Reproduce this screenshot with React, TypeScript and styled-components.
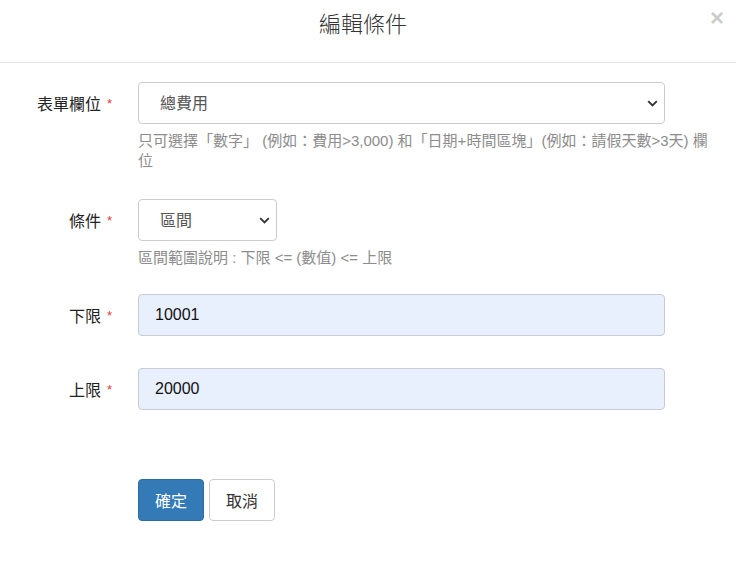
import styled, { createGlobalStyle } from 'styled-components';

const GlobalStyle = createGlobalStyle`
  html, body {
    margin: 0;
    padding: 0;
    background: #fff;
  }
  body {
    font-family: "Liberation Sans", "Noto Sans CJK TC", sans-serif;
    color: #333;
  }
  * {
    box-sizing: border-box;
  }
`;

const Modal = styled.div`
  width: 736px;
  height: 565px;
  background: #fff;
`;

const Header = styled.div`
  position: relative;
  height: 63px;
  border-bottom: 1px solid #e5e5e5;
  display: flex;
  align-items: center;
  justify-content: center;
  padding: 0 10px 12px 0;
`;

const Title = styled.h4`
  margin: 0;
  font-size: 22px;
  font-weight: 300;
  color: #333;
  line-height: 1.2;
`;

const Close = styled.button`
  position: absolute;
  top: 6px;
  right: 12px;
  border: 0;
  background: none;
  padding: 0;
  font-family: "Liberation Sans", sans-serif;
  font-size: 24px;
  font-weight: 700;
  line-height: 1;
  color: #000;
  opacity: 0.2;
  cursor: pointer;
`;

const Body = styled.form`
  padding: 19px 15px 0 0;
`;

const Group = styled.div<{ $gap: number }>`
  display: grid;
  grid-template-columns: 112px 1fr;
  column-gap: 26px;
  margin-bottom: ${p => p.$gap}px;
`;

const Label = styled.label`
  grid-column: 1;
  grid-row: 1;
  align-self: center;
  text-align: right;
  font-size: 16px;
  font-weight: 400;
  color: #222;
  white-space: nowrap;
`;

const Required = styled.span`
  color: #e53935;
  font-size: 13px;
  margin-left: 6px;
  vertical-align: 2px;
`;

const Control = styled.div<{ $width: number }>`
  grid-column: 2;
  grid-row: 1;
  position: relative;
  width: ${p => p.$width}px;
`;

const Select = styled.select`
  appearance: none;
  width: 100%;
  height: 42px;
  padding: 0 30px 0 21px;
  font-family: inherit;
  font-size: 16px;
  color: #555;
  background: #fff;
  border: 1px solid #ccc;
  border-radius: 4px;
  outline: none;
`;

const Arrow = styled.svg`
  position: absolute;
  right: 7px;
  top: 18px;
  pointer-events: none;
`;

const Input = styled.input`
  width: 100%;
  height: 42px;
  padding: 0 16px;
  font-family: inherit;
  font-size: 16px;
  color: #111;
  background: #e8f0fe;
  border: 1px solid #c8ccd1;
  border-radius: 4px;
  outline: none;
`;

const Help = styled.p`
  grid-column: 2;
  grid-row: 2;
  margin: 7px 0 0;
  font-size: 15px;
  line-height: 20px;
  color: #8c8c8c;
`;

const Actions = styled.div`
  display: flex;
  gap: 5px;
  margin-left: 138px;
  margin-top: 69px;
`;

const Button = styled.button<{ $primary?: boolean }>`
  height: 42px;
  padding: 0 16px;
  font-family: inherit;
  font-size: 16px;
  border-radius: 4px;
  cursor: pointer;
  color: ${p => (p.$primary ? '#fff' : '#333')};
  background: ${p => (p.$primary ? '#337ab7' : '#fff')};
  border: 1px solid ${p => (p.$primary ? '#2e6da4' : '#ccc')};
`;

const Chevron = () => (
  <Arrow width="11" height="7" viewBox="0 0 11 7">
    <path d="M1.2 1.2 5.5 5.5 9.8 1.2" fill="none" stroke="#333" strokeWidth="1.9" />
  </Arrow>
);

const App = () => (
  <>
    <GlobalStyle />
    <Modal>
      <Header>
        <Title>編輯條件</Title>
        <Close type="button">×</Close>
      </Header>
      <Body>
        <Group $gap={28}>
          <Label>
            表單欄位<Required>*</Required>
          </Label>
          <Control $width={527}>
            <Select defaultValue="total">
              <option value="total">總費用</option>
            </Select>
            <Chevron />
          </Control>
          <Help>
            只可選擇「數字」 (例如：費用&gt;3,000) 和「日期+時間區塊」(例如：請假天數&gt;3天) 欄位
          </Help>
        </Group>
        <Group $gap={26}>
          <Label>
            條件<Required>*</Required>
          </Label>
          <Control $width={139}>
            <Select defaultValue="range">
              <option value="range">區間</option>
            </Select>
            <Chevron />
          </Control>
          <Help>區間範圍說明 : 下限 &lt;= (數值) &lt;= 上限</Help>
        </Group>
        <Group $gap={32}>
          <Label>
            下限<Required>*</Required>
          </Label>
          <Control $width={527}>
            <Input defaultValue="10001" />
          </Control>
        </Group>
        <Group $gap={0}>
          <Label>
            上限<Required>*</Required>
          </Label>
          <Control $width={527}>
            <Input defaultValue="20000" />
          </Control>
        </Group>
        <Actions>
          <Button type="button" $primary>
            確定
          </Button>
          <Button type="button">取消</Button>
        </Actions>
      </Body>
    </Modal>
  </>
);

export default App;
